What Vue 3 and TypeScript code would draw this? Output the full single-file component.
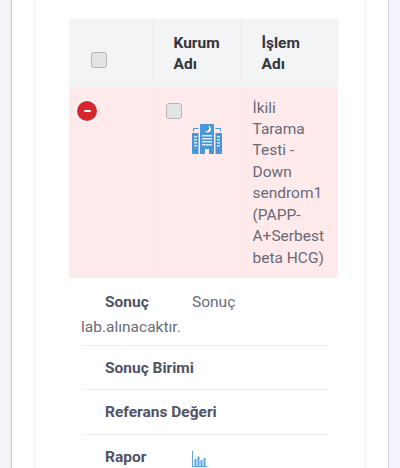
<script setup lang="ts">
const lines: string[] = ['İkili', 'Tarama', 'Testi -', 'Down', 'sendrom1', '(PAPP-', 'A+Serbest', 'beta HCG)']
</script>

<template>
  <div class="page">
    <div class="outer">
      <div class="inner">
        <table class="grid">
          <thead>
            <tr>
              <th class="c1"><span class="check head-check"></span></th>
              <th class="c2">Kurum<br />Adı</th>
              <th class="c3">İşlem<br />Adı</th>
            </tr>
          </thead>
          <tbody>
            <tr class="parent">
              <td class="c1">
                <span class="toggle"><span class="dash"></span></span>
              </td>
              <td class="c2">
                <span class="check"></span>
                <svg class="building" viewBox="0 0 30 30" aria-hidden="true">
                  <path fill="#4a97d8" d="M9 0h12a1 1 0 0 1 1 1v29h-5v-5h-4v5H8V1a1 1 0 0 1 1-1z" />
                  <path fill="#4a97d8" d="M0 9h6.500v21H1a1 1 0 0 1-1-1zM23.500 9H30v20a1 1 0 0 1-1 1h-5.500z" />
                  <path fill="none" stroke="#4a97d8" d="M1.500 7.500V4.500h5M28.500 7.500V4.500h-5" />
                  <path fill="#fff" d="M15.500 1.500a3.500 3.500 0 1 1-3 5.300 3 3 0 0 0 3-5.300z" />
                  <g fill="#d5e7f6">
                    <rect x="10" y="11" width="10" height="1.500" /><rect x="10" y="14" width="10" height="1.500" />
                    <rect x="10" y="17" width="10" height="1.500" /><rect x="10" y="20" width="10" height="1.500" />
                    <rect x="2" y="12" width="3" height="1.500" /><rect x="2" y="15" width="3" height="1.500" />
                    <rect x="2" y="18" width="3" height="1.500" /><rect x="2" y="21" width="3" height="1.500" />
                    <rect x="25" y="12" width="3" height="1.500" /><rect x="25" y="15" width="3" height="1.500" />
                    <rect x="25" y="18" width="3" height="1.500" /><rect x="25" y="21" width="3" height="1.500" />
                  </g>
                </svg>
              </td>
              <td class="c3 name">
                <template v-for="l in lines" :key="l">{{ l }}<br /></template>
              </td>
            </tr>
          </tbody>
        </table>
        <ul class="details">
          <li class="first"><span class="title">Sonuç</span><span>Sonuç lab.alınacaktır.</span></li>
          <li><span class="title">Sonuç Birimi</span></li>
          <li><span class="title">Referans Değeri</span></li>
          <li class="last">
            <span class="title">Rapor</span>
            <svg class="chart" viewBox="0 0 15 16" aria-hidden="true">
              <path fill="#5aa5dc" d="M0 0h1v15h14v1H0zM2.500 8h2v7h-2zM5.500 5.500h2V15h-2zM8.500 9h2v6h-2zM11.500 7h2v8h-2z" />
            </svg>
          </li>
        </ul>
      </div>
    </div>
  </div>
</template>

<style>
html, body { margin: 0; background: #f3f4f9; }
</style>

<style scoped>
.page {
  width: 400px;
  height: 468px;
  overflow: hidden;
  box-sizing: border-box;
  padding: 0 11px 0 11px;
  background: #f3f4f9;
  font-family: Roboto, "Liberation Sans", sans-serif;
  font-size: 15.5px;
  line-height: 21.43px;
  color: #6a6c7a;
}
.outer {
  width: 378px;
  height: 468px;
  box-sizing: border-box;
  background: #fff;
  border-left: 1px solid #c9cbd3;
  border-right: 1px solid #d3d5dc;
  padding: 0 22px;
}
.inner {
  height: 468px;
  box-sizing: border-box;
  border-left: 1px solid #f1f2f5;
  border-right: 1px solid #f1f2f5;
  padding: 19px 26px 0 34px;
}
.grid {
  border-collapse: collapse;
  table-layout: fixed;
  width: 269px;
}
th, td {
  border: 1px solid #eceef1;
  vertical-align: top;
  text-align: left;
  box-sizing: border-box;
}
.grid tr > :first-child { border-left: 0; }
.grid tr > :last-child { border-right: 0; }
.grid thead th { border-top: 0; }
.c1 { width: 83px; }
.c2 { width: 88px; }
.c3 { width: 98px; }
th {
  height: 68px;
  background: #f3f4f5;
  padding: 12px 0 12px 21px;
  color: #33343c;
  font-weight: 700;
}
th.c2, th.c3 { padding-top: 14px; padding-bottom: 10px; }
th.c1 { padding: 33px 0 0 22px; }
.check {
  display: block;
  width: 16px;
  height: 16px;
  box-sizing: border-box;
  background: #e4e4e4;
  border: 1.5px solid #b5b5b5;
  border-radius: 3px;
}
.parent td {
  height: 191px;
  background: #ffeaeb;
  border-color: #f9e4e6;
  border-top: 0;
  border-bottom: 0;
}
.parent td.c1 { padding: 13px 0 0 8px; }
.parent td.c2 { padding: 15px 0 0 13px; }
.toggle {
  display: flex;
  align-items: center;
  justify-content: center;
  width: 20px;
  height: 20px;
  border-radius: 50%;
  background: #d6272f;
  box-shadow: 0 0 0 1.5px #fff6f6;
}
.dash {
  width: 7px;
  height: 2px;
  background: #fff;
  border-radius: 1px;
}
.building {
  display: block;
  width: 30px;
  height: 30px;
  margin: 5px 0 0 26px;
}
.name {
  padding: 10px 0 0 12px;
  color: #686a78;
}
.details {
  list-style: none;
  margin: 0;
  padding: 0 11px 0 12px;
}
.details li {
  border-bottom: 1px solid #eff0f3;
  padding: 11.5px 0 10.5px;
  color: #6a6c7a;
}
.details li.first { padding-top: 11.5px; padding-bottom: 5.5px; line-height: 25px; }
.details li.last { border-bottom: 0; display: flex; align-items: flex-start; padding-top: 12px; }
.title {
  display: inline-block;
  box-sizing: border-box;
  min-width: 111px;
  padding-left: 24px;
  font-weight: 700;
  color: #515365;
}
.chart {
  display: block;
  width: 15px;
  height: 16px;
  margin: 4px 0 0 0;
}
</style>
